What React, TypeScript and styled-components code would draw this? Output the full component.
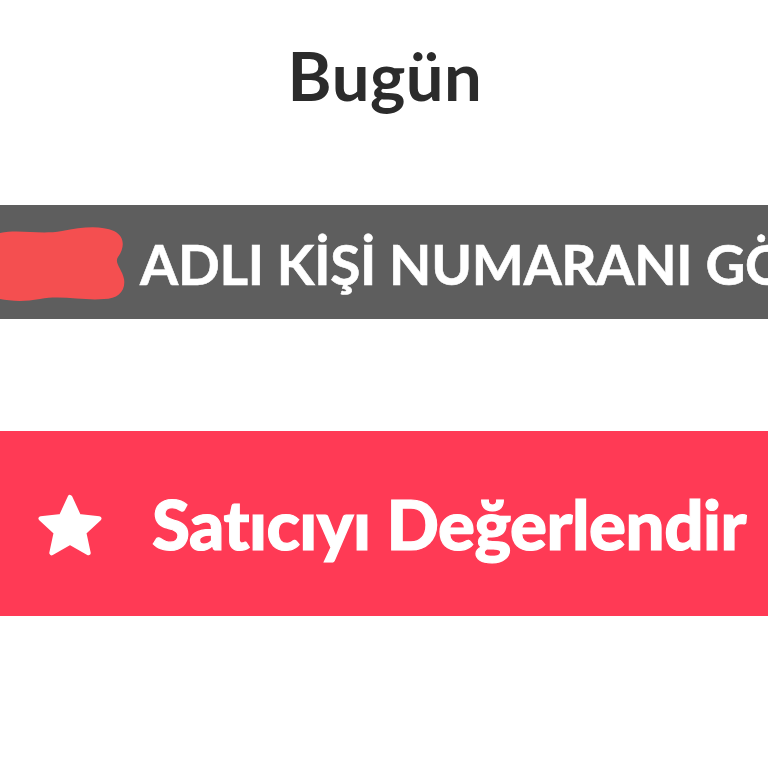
import styled, { createGlobalStyle } from "styled-components";

const GlobalStyle = createGlobalStyle`
  html, body {
    margin: 0;
    padding: 0;
    background: #ffffff;
  }
  body {
    width: 768px;
    height: 768px;
    overflow: hidden;
  }
`;

const Page = styled.div`
  width: 768px;
  height: 768px;
  display: flex;
  flex-direction: column;
  background: #ffffff;
  overflow: hidden;
`;

const DayTitle = styled.h1`
  margin: 37px 0 0;
  text-align: center;
  font-family: "Lato", "Open Sans", sans-serif;
  font-weight: 700;
  font-size: 67px;
  line-height: 76px;
  letter-spacing: 0.5px;
  color: #2b2b2b;
  padding-left: 2px;
`;

const NoticeBar = styled.div`
  margin-top: 92px;
  height: 114px;
  background: #5e5e5e;
  display: flex;
  align-items: center;
  gap: 12px;
  overflow: hidden;
  white-space: nowrap;
`;

const Scribble = styled.svg`
  flex: 0 0 auto;
  width: 128px;
  height: 80px;
  margin-top: 6px;
`;

const NoticeText = styled.span`
  font-family: "Lato", "Open Sans", sans-serif;
  font-weight: 700;
  font-size: 55px;
  letter-spacing: -0.3px;
  color: #ffffff;
  margin-top: 4px;
  -webkit-text-stroke: 0.6px #ffffff;
`;

const RateButton = styled.button`
  margin-top: 112px;
  height: 185px;
  border: none;
  padding: 0 0 0 34px;
  background: #ff3a55;
  display: flex;
  align-items: center;
  gap: 46px;
  cursor: pointer;
  white-space: nowrap;
  overflow: hidden;
`;

const StarIcon = styled.svg`
  flex: 0 0 auto;
  width: 72px;
  height: 70px;
  margin-top: 6px;
`;

const RateLabel = styled.span`
  font-family: "Lato", "Open Sans", sans-serif;
  font-weight: 900;
  font-size: 69px;
  letter-spacing: -0.5px;
  color: #ffffff;
  -webkit-text-stroke: 1.2px #ffffff;
`;

export default function App() {
  return (
    <Page>
      <GlobalStyle />
      <DayTitle>Bugün</DayTitle>
      <NoticeBar>
        <Scribble viewBox="0 0 128 80">
          {/* hand-drawn marker blot over the name */}
          <path
            d="M0 8 C20 4 40 10 62 6 C82 2 100 0 114 6 C126 12 124 24 118 32 C114 38 122 44 124 54 C126 66 118 74 104 74 C84 76 62 70 40 74 C24 77 10 76 0 74 Z"
            fill="#f44f50"
          />
        </Scribble>
        <NoticeText>ADLI KİŞİ NUMARANI GÖRDÜ</NoticeText>
      </NoticeBar>
      <RateButton>
        <StarIcon viewBox="0 0 24 24">
          <path
            d="M12 1.8l3 6.5 7 .8-5.2 4.8 1.5 7-6.3-3.6-6.3 3.6 1.5-7L2 9.1l7-.8z"
            fill="#ffffff"
            stroke="#ffffff"
            strokeWidth="1.6"
            strokeLinejoin="round"
          />
        </StarIcon>
        <RateLabel>Satıcıyı Değerlendir</RateLabel>
      </RateButton>
    </Page>
  );
}
